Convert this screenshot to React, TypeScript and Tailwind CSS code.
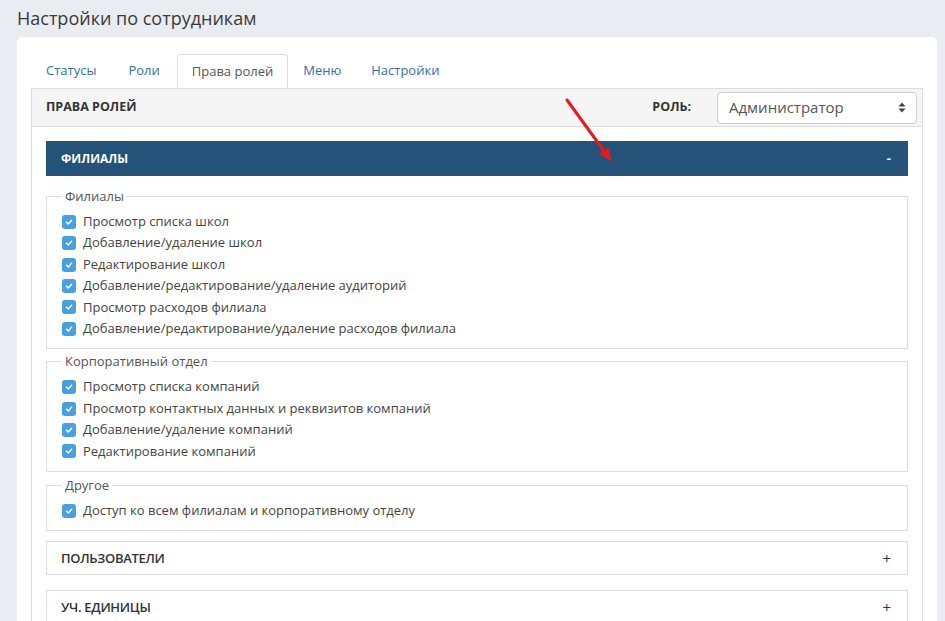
import React from "react";

type Group = { title: string; items: string[] };

const groups: Group[] = [
  {
    title: "Филиалы",
    items: [
      "Просмотр списка школ",
      "Добавление/удаление школ",
      "Редактирование школ",
      "Добавление/редактирование/удаление аудиторий",
      "Просмотр расходов филиала",
      "Добавление/редактирование/удаление расходов филиала",
    ],
  },
  {
    title: "Корпоративный отдел",
    items: [
      "Просмотр списка компаний",
      "Просмотр контактных данных и реквизитов компаний",
      "Добавление/удаление компаний",
      "Редактирование компаний",
    ],
  },
  {
    title: "Другое",
    items: ["Доступ ко всем филиалам и корпоративному отделу"],
  },
];

function CheckBox() {
  return (
    <span className="flex h-[14px] w-[14px] shrink-0 items-center justify-center rounded-[3px] bg-[#4a9fde]">
      <svg width="8" height="8" viewBox="0 0 8 8" fill="none">
        <path d="M1.5 4.2 L3.3 5.9 L6.6 2.2" stroke="white" strokeWidth="1.5" strokeLinecap="round" strokeLinejoin="round" />
      </svg>
    </span>
  );
}

function PermissionGroup({ group, className }: { group: Group; className: string }) {
  return (
    <fieldset className={`border border-[#dddddd] px-[15px] pb-[9px] ${className}`}>
      <legend className="px-[3px] text-[13px] leading-[20px] text-[#555]">{group.title}</legend>
      <div className="pt-[5px]">
        {group.items.map((item) => (
          <label key={item} className="flex items-center gap-[7px] text-[13px] leading-[21.4px] text-[#444]">
            <CheckBox />
            <span>{item}</span>
          </label>
        ))}
      </div>
    </fieldset>
  );
}

function CollapsedSection({ title, className }: { title: string; className: string }) {
  return (
    <div className={`flex h-[34px] items-center justify-between border border-[#dddddd] pl-[14px] pr-[16px] ${className}`}>
      <span className="text-[13px] font-semibold tracking-[-0.3px] text-[#333]">{title}</span>
      <span className="text-[15px] text-[#333]">+</span>
    </div>
  );
}

export default function App() {
  return (
    <div className="relative h-[621px] overflow-hidden bg-[#e9ecf1] font-['Open_Sans',sans-serif]">
      <h1 className="h-[37px] pl-[17px] pt-[6px] text-[18px] leading-[24px] text-[#3a3a3a]">
        Настройки по сотрудникам
      </h1>

      <div className="ml-[17px] w-[920px] rounded-[5px] bg-white px-[14px] pt-[17px] pb-[40px]">
        {/* tab strip */}
        <div className="flex h-[34px]">
          <div className="mr-[2px] flex items-center px-[15px] text-[13px] text-[#3570a9]">Статусы</div>
          <div className="mr-[2px] flex items-center px-[15px] text-[13px] text-[#3570a9]">Роли</div>
          <div className="flex items-center rounded-t-[3px] border border-b-0 border-[#dddddd] bg-white px-[14px] text-[13px] text-[#555]">
            Права ролей
          </div>
          <div className="flex items-center px-[15px] text-[13px] text-[#3570a9]">Меню</div>
          <div className="flex items-center px-[15px] text-[13px] text-[#3570a9]">Настройки</div>
        </div>

        {/* roles panel */}
        <div className="border border-[#dddddd]">
          <div className="flex h-[38px] items-center justify-between border-b border-[#dddddd] bg-[#f5f5f5] pl-[14px] pr-[5px]">
            <span className="text-[12.5px] font-bold text-[#333]">ПРАВА РОЛЕЙ</span>
            <div className="flex items-center">
              <span className="mr-[26px] text-[12.5px] font-bold text-[#333]">РОЛЬ:</span>
              <div className="flex h-[32px] w-[200px] items-center justify-between rounded-[4px] border border-[#cccccc] bg-white pl-[11px] pr-[10px]">
                <span className="text-[15px] text-[#555]">Администратор</span>
                <svg width="8" height="11" viewBox="0 0 8 11">
                  <path d="M4 0.5 L7.5 4.5 H0.5 Z" fill="#444" />
                  <path d="M4 10.5 L7.5 6.5 H0.5 Z" fill="#444" />
                </svg>
              </div>
            </div>
          </div>

          <div className="px-[14px] pt-[14px] pb-[20px]">
            <div className="flex h-[35px] items-center justify-between bg-[#255279] pl-[15px] pr-[17px]">
              <span className="text-[12px] font-bold text-white">ФИЛИАЛЫ</span>
              <span className="text-[13px] font-bold text-white">-</span>
            </div>

            <PermissionGroup group={groups[0]} className="mt-[10px]" />
            <PermissionGroup group={groups[1]} className="mt-[2px]" />
            <PermissionGroup group={groups[2]} className="mt-[3px]" />

            <CollapsedSection title="ПОЛЬЗОВАТЕЛИ" className="mt-[10px]" />
            <CollapsedSection title="УЧ. ЕДИНИЦЫ" className="mt-[15px]" />
          </div>
        </div>
      </div>

      {/* red pointer arrow */}
      <svg className="pointer-events-none absolute left-0 top-0" width="945" height="621">
        <line x1="567" y1="100" x2="604" y2="151" stroke="#e5191f" strokeWidth="3" strokeLinecap="round" />
        <polygon points="612,162 608.3,147.3 599.5,153.7" fill="#e5191f" />
      </svg>
    </div>
  );
}
